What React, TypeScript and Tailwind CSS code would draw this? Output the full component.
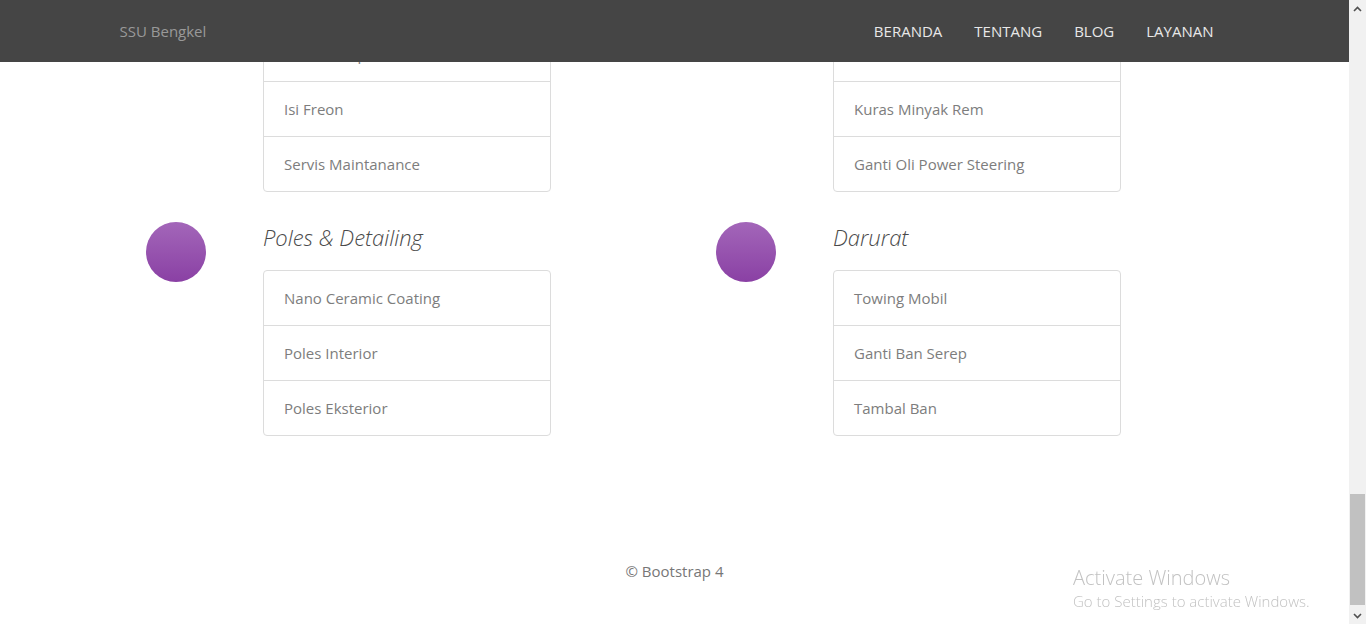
import React from "react";

type Service = { title?: string; items: string[] };

const rows: Service[][] = [
    [
        { items: ["Ganti Kompresor", "Isi Freon", "Servis Maintanance"] },
        { items: ["Ganti Oli Mesin", "Kuras Minyak Rem", "Ganti Oli Power Steering"] },
    ],
    [
        { title: "Poles & Detailing", items: ["Nano Ceramic Coating", "Poles Interior", "Poles Eksterior"] },
        { title: "Darurat", items: ["Towing Mobil", "Ganti Ban Serep", "Tambal Ban"] },
    ],
];

function ListGroup({ items }: { items: string[] }) {
    return (
        <ul className="w-[288px] border border-[#dcdcdc] rounded-[4px] bg-white">
            {items.map((it, i) => (
                <li
                    key={it}
                    className={`flex items-center px-[20px] text-[15px] text-[#7d7d7d] ${i > 0 ? "h-[55px] border-t border-[#dcdcdc]" : "h-[54px]"}`}
                >
                    {it}
                </li>
            ))}
        </ul>
    );
}

function ServiceCol({ s }: { s: Service }) {
    if (!s.title) {
        // top block is scrolled under the navbar, only the list shows
        return (
            <div className="pl-[158.5px]">
                <ListGroup items={s.items} />
            </div>
        );
    }
    return (
        <div className="flex items-start pl-[41.5px]">
            <div className="w-[60px] h-[60px] rounded-full bg-gradient-to-b from-[#a366b9] to-[#8a40a4] shrink-0" />
            <div className="ml-[57px]">
                <h4 className="text-[22px] leading-[30px] font-light italic text-[#4a4a4a] mb-[18px]">{s.title}</h4>
                <ListGroup items={s.items} />
            </div>
        </div>
    );
}

export default function App() {
    return (
        <div className="relative h-[624px] overflow-hidden bg-white" style={{ fontFamily: '"Open Sans", "Noto Sans", sans-serif' }}>
            <div className="w-[1349px]">
                {/* navbar */}
                <nav className="fixed top-0 left-0 w-[1349px] h-[62px] bg-[#454545] z-10">
                    <div className="w-[1140px] mx-auto px-[15px] h-full flex items-center justify-between">
                        <span className="text-[15px] text-[#999]">SSU Bengkel</span>
                        <ul className="flex">
                            {["BERANDA", "TENTANG", "BLOG", "LAYANAN"].map((n) => (
                                <li key={n} className="px-[16px] text-[15px] text-[#e8e8e8]">{n}</li>
                            ))}
                        </ul>
                    </div>
                </nav>

                <main className="w-[1140px] mx-auto pt-[26px]">
                    {rows.map((row, r) => (
                        <div key={r} className={`grid grid-cols-2 ${r > 0 ? "mt-[30px]" : ""}`}>
                            {row.map((s, c) => (
                                <ServiceCol key={c} s={s} />
                            ))}
                        </div>
                    ))}
                </main>

                <footer className="mt-[124px] text-center text-[15px] leading-[22px] text-[#777]">
                    © Bootstrap 4
                </footer>
            </div>

            {/* windows watermark */}
            <div className="fixed left-[1073px] top-[564px] z-20 text-[#c2c2c2] font-light" style={{ fontFamily: '"Open Sans", "Noto Sans", sans-serif' }}>
                <div className="text-[20px] leading-[27px]">Activate Windows</div>
                <div className="text-[15px] leading-[20px]">Go to Settings to activate Windows.</div>
            </div>

            {/* scrollbar */}
            <div className="fixed top-0 right-0 w-[17px] h-[624px] bg-[#f1f1f1] z-30 flex flex-col">
                <div className="h-[17px] flex items-center justify-center">
                    <svg width="9" height="6" viewBox="0 0 9 6"><path d="M1 5 L4.5 1.5 L8 5" fill="none" stroke="#505050" strokeWidth="1.6" /></svg>
                </div>
                <div className="flex-1 relative">
                    <div className="absolute left-[1px] right-[1px] top-[477px] h-[111px] bg-[#c1c1c1]" />
                </div>
                <div className="h-[17px] flex items-center justify-center">
                    <svg width="9" height="6" viewBox="0 0 9 6"><path d="M1 1 L4.5 4.5 L8 1" fill="none" stroke="#505050" strokeWidth="1.6" /></svg>
                </div>
            </div>
        </div>
    );
}
